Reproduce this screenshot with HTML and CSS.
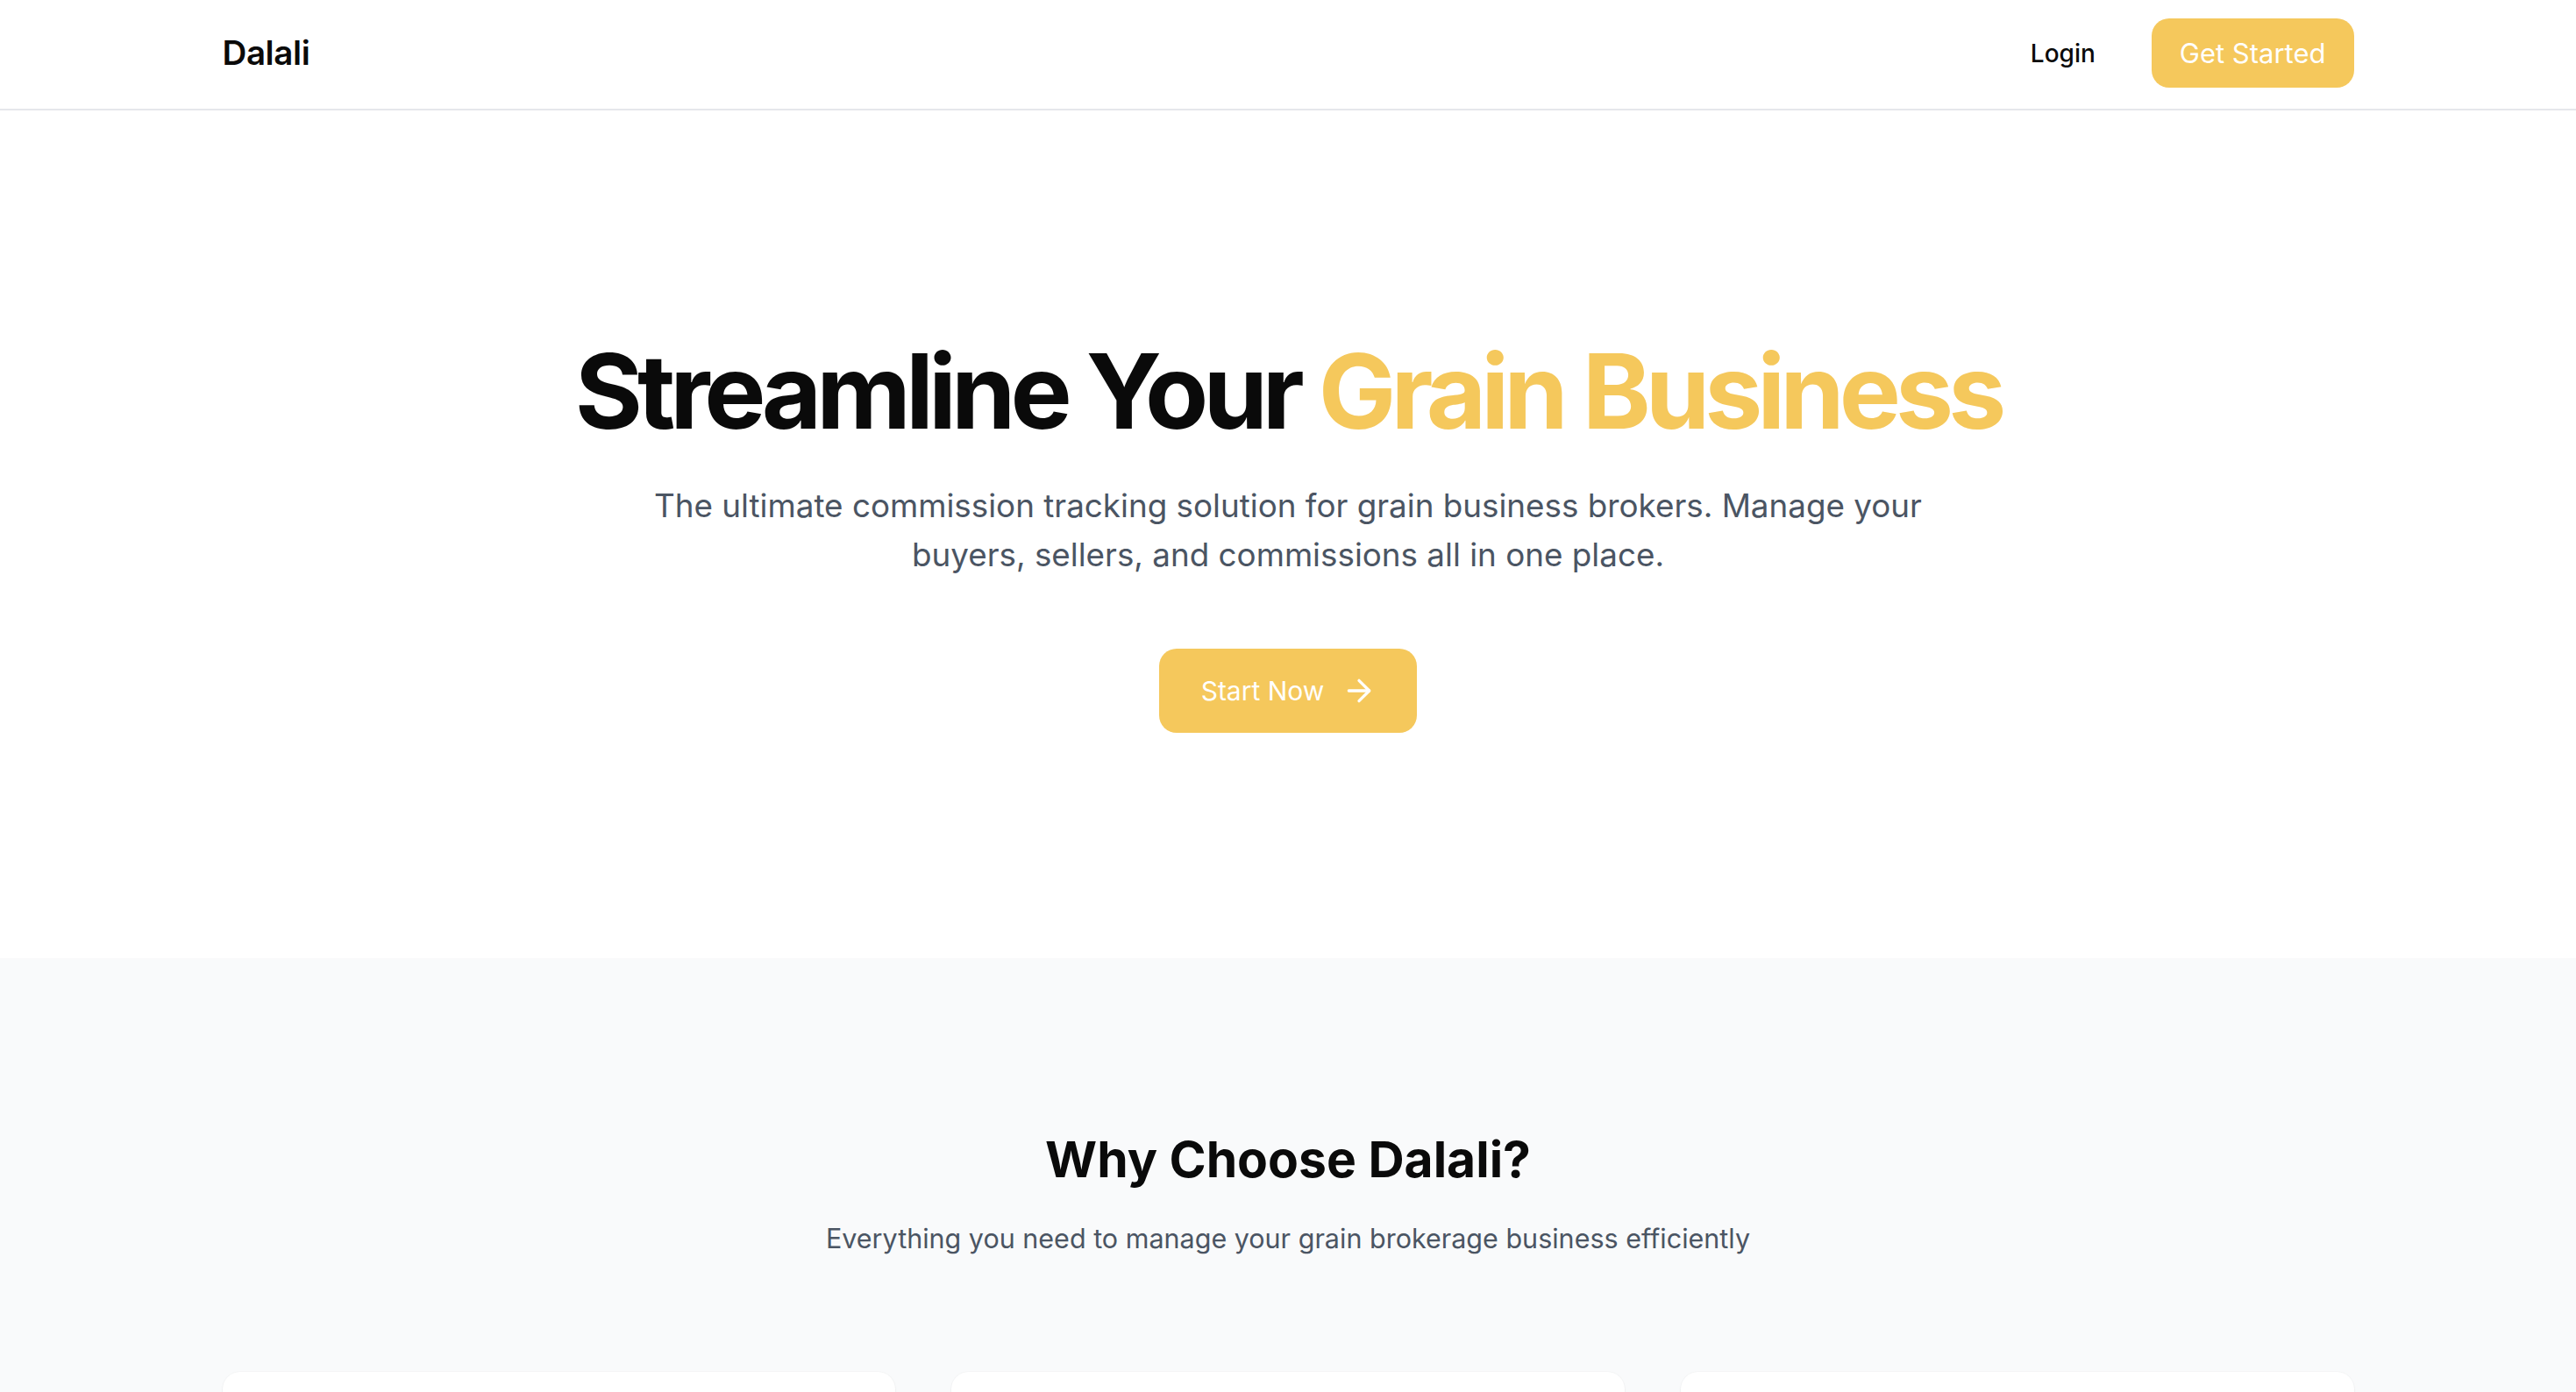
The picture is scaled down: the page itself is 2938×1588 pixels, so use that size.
FILE: index.html
```html
<!DOCTYPE html>
<html lang="en">
<head>
<meta charset="utf-8">
<title>Dalali</title>
<link rel="stylesheet" href="styles.css">
</head>
<body>
<header class="site-header">
  <div class="container header-inner">
    <a class="logo" href="#">Dalali</a>
    <nav class="nav">
      <a class="nav-login" href="#">Login</a>
      <a class="btn btn-header" href="#">Get Started</a>
    </nav>
  </div>
</header>

<main>
  <section class="hero">
    <div class="container hero-inner">
      <h1 class="hero-title">Streamline Your <span class="accent">Grain Business</span></h1>
      <p class="hero-sub">The ultimate commission tracking solution for grain business brokers. Manage your buyers, sellers, and commissions all in one place.</p>
      <a class="btn btn-hero" href="#">Start Now
        <svg class="arrow" viewBox="0 0 24 24" fill="none" stroke="currentColor" stroke-width="2" stroke-linecap="round" stroke-linejoin="round"><path d="M5 12h14"/><path d="m12 5 7 7-7 7"/></svg>
      </a>
    </div>
  </section>

  <section class="features">
    <div class="container">
      <h2 class="features-title">Why Choose Dalali?</h2>
      <p class="features-sub">Everything you need to manage your grain brokerage business efficiently</p>
      <div class="cards">
        <div class="card"></div>
        <div class="card"></div>
        <div class="card"></div>
      </div>
    </div>
  </section>
</main>
</body>
</html>
```

FILE: styles.css
```css
* { box-sizing: border-box; margin: 0; padding: 0; }

html, body {
  background: #ffffff;
  font-family: Inter, "Noto Sans", "Liberation Sans", sans-serif;
  color: #0a0a0a;
}

a { text-decoration: none; color: inherit; }

.container {
  width: 2431px;
  margin: 0 auto;
}

.site-header {
  height: 126px;
  border-bottom: 2px solid #e5e7eb;
  background: #ffffff;
}

.header-inner {
  height: 124px;
  display: flex;
  align-items: center;
  justify-content: space-between;
}

.logo {
  font-size: 38.5px;
  font-weight: 600;
  letter-spacing: -0.4px;
  color: #0a0a0a;
  margin-top: -4px;
}

.nav {
  display: flex;
  align-items: center;
  gap: 64px;
}

.nav-login {
  font-size: 28px;
  font-weight: 500;
  color: #0a0a0a;
  margin-top: -2px;
}

.btn {
  display: inline-flex;
  align-items: center;
  justify-content: center;
  background: #f5c85c;
  color: #ffffff;
  font-weight: 400;
}

.btn-header {
  height: 79px;
  padding: 0 32px;
  border-radius: 20px;
  font-size: 31px;
  margin-top: -4px;
}

.hero {
  padding: 252px 0 257px;
  background: #ffffff;
}

.hero-inner {
  display: flex;
  flex-direction: column;
  align-items: center;
  text-align: center;
}

.hero-title {
  font-size: 118px;
  line-height: 136px;
  font-weight: 700;
  letter-spacing: -6px;
  color: #0a0a0a;
}

.accent { color: #f5c85c; }

.hero-sub {
  margin-top: 35px;
  max-width: 1480px;
  font-size: 36.8px;
  line-height: 56px;
  color: #4b5563;
}

.btn-hero {
  margin-top: 79px;
  height: 96px;
  padding: 0 46px 0 48px;
  gap: 20px;
  border-radius: 20px;
  font-size: 30px;
}

.arrow {
  width: 40px;
  height: 40px;
}

.features {
  background: #f9fafb;
  padding: 195px 0 200px;
  text-align: center;
}

.features-title {
  font-size: 57px;
  line-height: 70px;
  font-weight: 700;
  color: #0a0a0a;
}

.features-sub {
  margin-top: 31px;
  font-size: 30.5px;
  line-height: 48px;
  color: #4b5563;
}

.cards {
  margin-top: 128px;
  display: grid;
  grid-template-columns: repeat(3, 1fr);
  gap: 64px;
}

.card {
  background: #ffffff;
  border-radius: 20px;
  box-shadow: 0 1px 3px rgba(0, 0, 0, 0.05), 0 0 0 1px rgba(0, 0, 0, 0.015);
  min-height: 360px;
}
```
